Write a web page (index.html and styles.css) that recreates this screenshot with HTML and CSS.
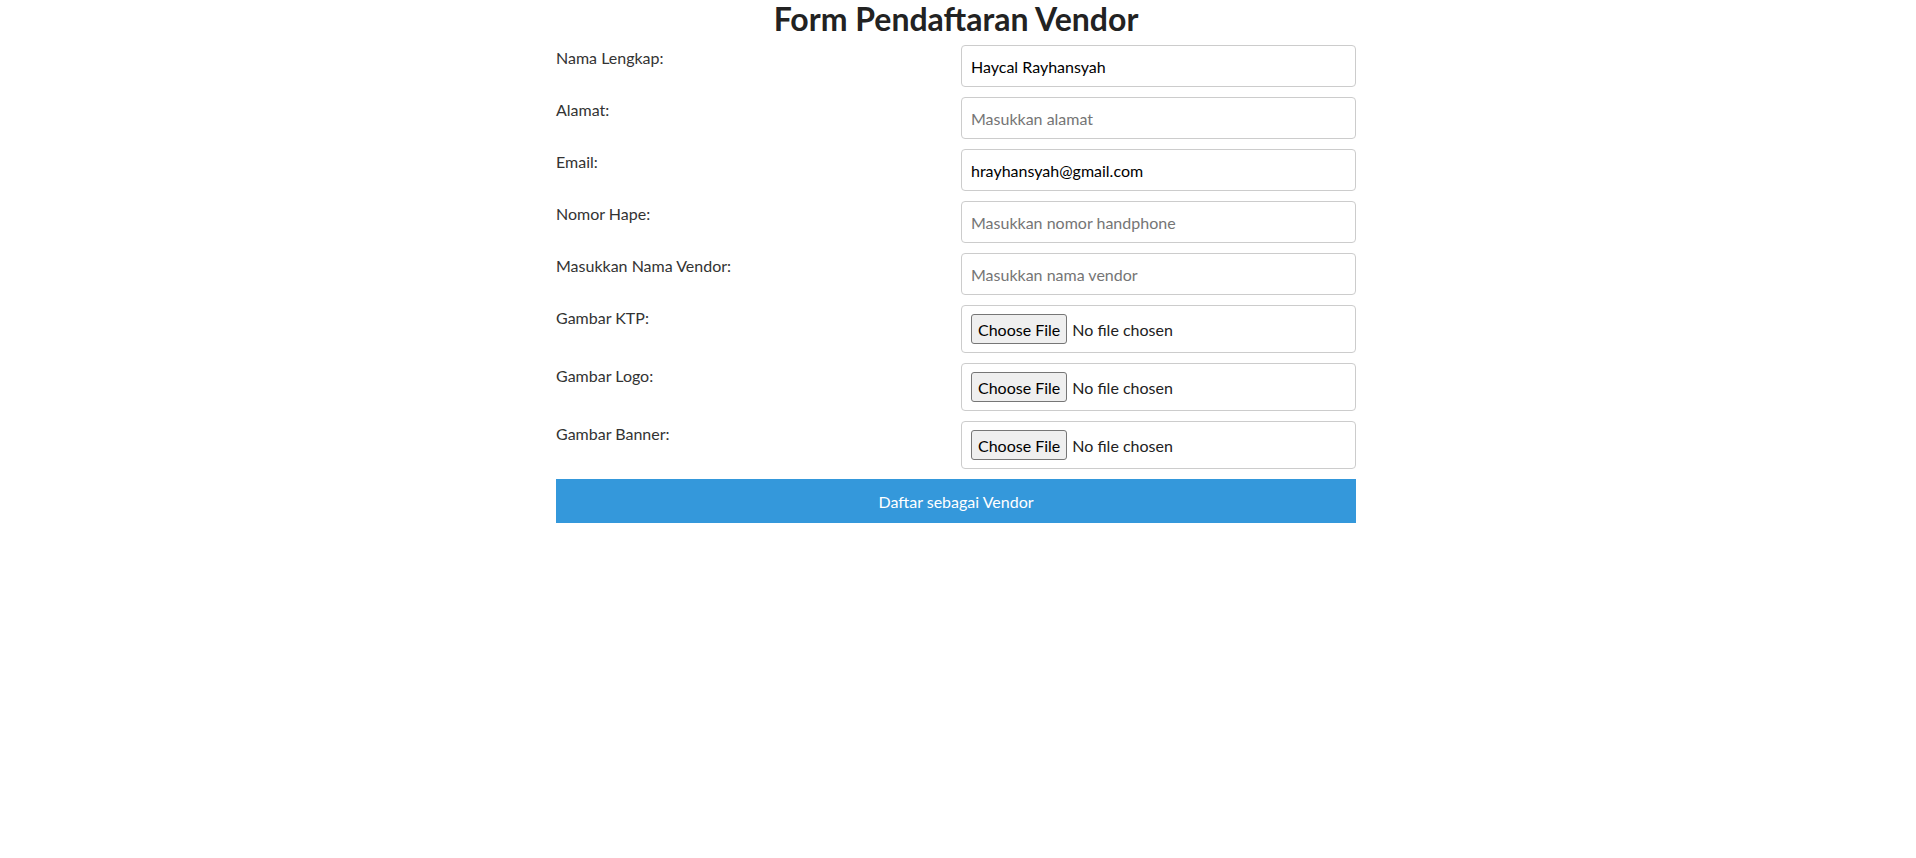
FILE: index.html
```html
<!DOCTYPE html>
<html lang="id">
<head>
<meta charset="utf-8">
<title>Form Pendaftaran Vendor</title>
<link rel="stylesheet" href="styles.css">
</head>
<body>
<main class="page">
  <h1 class="title">Form Pendaftaran Vendor</h1>
  <form class="form">
    <label class="label" for="nama">Nama Lengkap:</label>
    <input class="field" id="nama" type="text" value="Haycal Rayhansyah">

    <label class="label" for="alamat">Alamat:</label>
    <input class="field" id="alamat" type="text" placeholder="Masukkan alamat">

    <label class="label" for="email">Email:</label>
    <input class="field" id="email" type="email" value="hrayhansyah@gmail.com">

    <label class="label" for="hp">Nomor Hape:</label>
    <input class="field" id="hp" type="text" placeholder="Masukkan nomor handphone">

    <label class="label" for="vendor">Masukkan Nama Vendor:</label>
    <input class="field" id="vendor" type="text" placeholder="Masukkan nama vendor">

    <label class="label" for="ktp">Gambar KTP:</label>
    <input class="file" id="ktp" type="file">

    <label class="label" for="logo">Gambar Logo:</label>
    <input class="file" id="logo" type="file">

    <label class="label" for="banner">Gambar Banner:</label>
    <input class="file" id="banner" type="file">

    <button class="submit" type="button">Daftar sebagai Vendor</button>
  </form>
</main>
</body>
</html>
```
FILE: styles.css
```css
html, body {
  margin: 0;
  padding: 0;
  background: #ffffff;
}

body {
  padding-right: 4px;
  font-family: "Lato", "Open Sans", sans-serif;
  color: #333333;
}

.page {
  width: 800px;
  margin: 0 auto;
}

.title {
  margin: 0 0 7px;
  font-size: 32px;
  line-height: 38px;
  font-weight: 700;
  text-align: center;
  color: #222222;
}

.form {
  display: grid;
  grid-template-columns: 1fr 1fr;
  column-gap: 10px;
  row-gap: 10px;
  margin: 0;
}

.label {
  display: block;
  padding-top: 3px;
  font-size: 16px;
  line-height: 19px;
  color: #333333;
}

.field {
  display: block;
  box-sizing: border-box;
  width: 100%;
  height: 42px;
  margin: 0;
  padding: 10px 9px;
  border: 1px solid #cccccc;
  border-radius: 4px;
  font-family: "Lato", "Open Sans", sans-serif;
  font-size: 16px;
  color: #000000;
  background: #ffffff;
  outline: none;
}

.field::placeholder {
  color: #757575;
  opacity: 1;
}

.file {
  display: block;
  box-sizing: border-box;
  width: 100%;
  height: 48px;
  margin: 0;
  padding: 8px 9px;
  border: 1px solid #cccccc;
  border-radius: 4px;
  font-family: "Lato", "Open Sans", sans-serif;
  font-size: 16px;
  color: #222222;
  background: #ffffff;
}

.file::file-selector-button {
  box-sizing: border-box;
  height: 30px;
  margin: 0 5px 0 0;
  padding: 0 6px;
  border: 1px solid #767676;
  border-radius: 3px;
  background: #efefef;
  font-family: "Lato", "Open Sans", sans-serif;
  font-size: 16px;
  color: #000000;
}

.submit {
  grid-column: 1 / -1;
  height: 44px;
  margin: 0;
  padding: 0;
  border: none;
  border-radius: 0;
  background: #3498db;
  color: #ffffff;
  font-family: "Lato", "Open Sans", sans-serif;
  font-size: 16px;
  cursor: pointer;
}
```
